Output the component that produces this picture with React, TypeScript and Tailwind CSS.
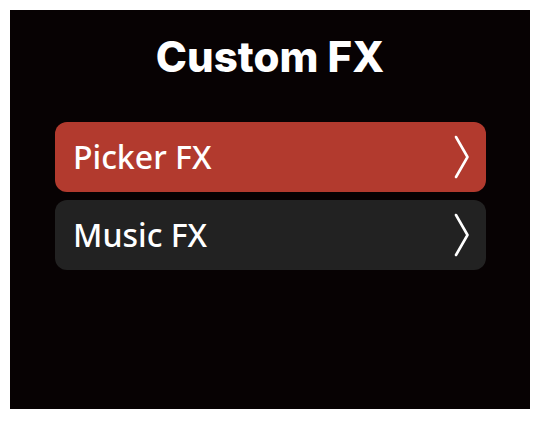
const items = [
  { label: "Picker FX", active: true },
  { label: "Music FX", active: false },
];

function Chevron() {
  return (
    <svg width="16" height="44" viewBox="0 0 16 44" fill="none" className="shrink-0">
      <path d="M2 2 L13.5 22 L2 42" stroke="white" strokeWidth="2.6" strokeLinecap="round" strokeLinejoin="round" />
    </svg>
  );
}

export default function App() {
  return (
    <div className="w-[540px] h-[421px] bg-white p-[10px] pb-0">
      <div className="w-[520px] h-[399px] bg-[#070203] flex flex-col pt-[18px]">
        <h1
          className="text-center text-[42px] font-extrabold text-white leading-[58px]"
          style={{ fontFamily: "Inter, 'Noto Sans', sans-serif" }}
        >
          Custom FX
        </h1>
        <div className="mt-[36px] w-[431px] ml-[45px] flex flex-col gap-[8px]">
          {items.map((it) => (
            <div
              key={it.label}
              className={`h-[70px] rounded-[12px] flex items-center justify-between pl-[18px] pr-[16px] ${
                it.active ? "bg-[#b23a2e]" : "bg-[#222222]"
              }`}
            >
              <span
                className="text-[32px] font-medium text-white"
                style={{ fontFamily: "'Noto Sans', 'Open Sans', sans-serif" }}
              >
                {it.label}
              </span>
              <Chevron />
            </div>
          ))}
        </div>
      </div>
    </div>
  );
}
